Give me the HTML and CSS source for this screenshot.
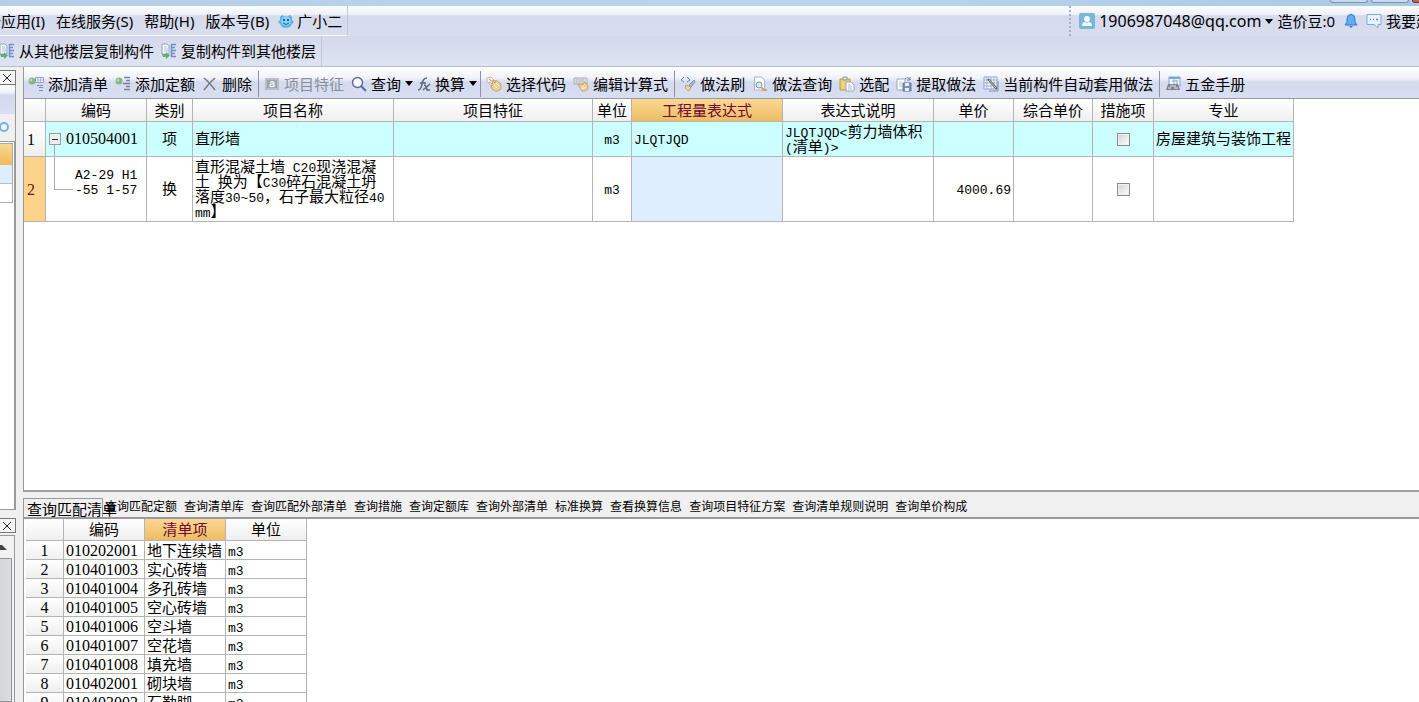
FILE: index.html
```html
<!DOCTYPE html>
<html lang="zh-CN">
<head>
<meta charset="utf-8">
<title>构件做法</title>
<link rel="stylesheet" href="styles.css">
</head>
<body>
<svg class="defs" aria-hidden="true">
  <symbol id="i-copy" viewBox="0 0 16 16"><path d="M1 1h5l2 2v8H1z" fill="#f4f8fd" stroke="#8fa6c4"/><path d="M3 4h3M3 6h4M3 8h4" stroke="#a3c4e5"/><path d="M1 11h4V9l4 3.500-4 3.500v-2H2z" fill="#5faf76"/><path d="M10 1.500h5M10 4.500h4M10 7.500h5M10 10.500h4M10 13.500h5M10.500 1v13" stroke="#6b8fc6" stroke-width="1.400"/></symbol>
  <symbol id="i-addlist" viewBox="0 0 16 16"><circle cx="4" cy="5" r="3.500" fill="#8bb387"/><circle cx="3" cy="4" r="1.500" fill="#bcd6b5"/><path d="M7.500 1.500h8v5h-8z" fill="#f5f8fc" stroke="#91a0b8"/><path d="M8 4h7M10 2v4M12.500 2v4" stroke="#a9b6ca"/><path d="M9 9.500h6M11 11.500h4M11 14.500h4" stroke="#8190a5"/></symbol>
  <symbol id="i-addquota" viewBox="0 0 16 16"><circle cx="4" cy="5" r="3.500" fill="#8bb387"/><circle cx="3" cy="4" r="1.500" fill="#bcd6b5"/><path d="M9 1.500h6M11 4.500h4M8 7.500h7M11 10.500h4M9 13.500h6" stroke="#75839a" stroke-width="1.300"/></symbol>
  <symbol id="i-del" viewBox="0 0 16 16"><path d="M2 2Q7 6 13 14M13 2Q7 7 2 14" fill="none" stroke="#777" stroke-width="1.500"/></symbol>
  <symbol id="i-feature" viewBox="0 0 16 16"><path d="M1 2h14v12H1z" fill="#b9bdc8"/><path d="M3 4h10v8H3z" fill="#9fa4b1"/><path d="M6 6.500Q9 4.500 10 7v4M10 8Q6 7.500 6 9.500T10 10" fill="none" stroke="#f4f5f8" stroke-width="1.400"/></symbol>
  <symbol id="i-search" viewBox="0 0 16 16"><circle cx="6.500" cy="6.500" r="5" fill="#fafcff" stroke="#5c669e" stroke-width="1.400"/><path d="M10 10l5 5" stroke="#5c669e" stroke-width="2"/></symbol>
  <symbol id="i-fx" viewBox="0 0 14 16"><path d="M1 14Q4 14 5 8T10 2M3 7h6M7 9q2 0 3 5h3M13 8L6 14" fill="none" stroke="#59657c" stroke-width="1.500"/></symbol>
  <symbol id="i-hand" viewBox="0 0 16 16"><path d="M1 2l4-1 5 5-5 4-4-5z" fill="#f5efe8" stroke="#c9b5a7"/><path d="M3 3l5 4M3 6l3 2" stroke="#c09588"/><path d="M6 9l1-5 2 3 1-3 5 4v5l-3 2H9l-4-3z" fill="#ecd09a" stroke="#c5a26a"/><path d="M8 9l3 3M10 7l3 3" stroke="#fff0cd"/></symbol>
  <symbol id="i-edit" viewBox="0 0 16 16"><path d="M1 2h13v6H1z" fill="#edf0f3" stroke="#a2a8ae"/><path d="M2 4h11M2 6h11M4 2v6M7 2v6M10 2v6" stroke="#b7bdc5"/><path d="M5 8l4 1 3-3 3 4v3l-3 2H9l-2-3z" fill="#ecd09a" stroke="#c5a26a"/><path d="M9 10l3 2M8 12l3 1" stroke="#fff0cd"/></symbol>
  <symbol id="i-brush" viewBox="0 0 16 16"><path d="M4 1L1 4l3 2M7 1l3 3-3 2" fill="none" stroke="#7184a5"/><path d="M14 4l1 2-4 5-2-2z" fill="#a5b6cc" stroke="#8596ad"/><path d="M6 9l5 2-2 4-4-3z" fill="#e4d8a9" stroke="#b5a773"/></symbol>
  <symbol id="i-find" viewBox="0 0 16 16"><path d="M2.500 1h7l3 3v10h-10z" fill="#fafcff" stroke="#aab4c5"/><circle cx="7" cy="9" r="3" fill="#d9eaf5" stroke="#8293a7"/><path d="M9 11l3 3h3" fill="none" stroke="#c5aa69" stroke-width="2"/></symbol>
  <symbol id="i-paste" viewBox="0 0 16 16"><path d="M1 3h10v11H1z" fill="#efcf78" stroke="#b99745"/><path d="M4 1h4v3H4z" fill="#e4e6e8" stroke="#899"/><path d="M7 6h5l3 3v6H7z" fill="#fff" stroke="#99a6ba"/><path d="M9 9h3M9 11h4M9 13h4" stroke="#afbdcf"/></symbol>
  <symbol id="i-extract" viewBox="0 0 16 16"><path d="M1 3h8v11H1z" fill="#fff" stroke="#98a9c1"/><path d="M3 6h3M3 8h3M3 10h3" stroke="#b4c6dc"/><path d="M7 7h8v8H7z" fill="#7d90be" stroke="#6474a1"/><path d="M9 7h4v3H9zM9 12h4v3H9z" fill="#e9eef8"/><path d="M9 3q3-3 5 1m0-3v3h-3" fill="none" stroke="#6581af"/></symbol>
  <symbol id="i-auto" viewBox="0 0 16 16"><path d="M1 1h13v12H1z" fill="#f8faff" stroke="#8ca2c5"/><path d="M1 4h13M1 7h13M1 10h13M4 1v12M8 1v12M11 1v12" stroke="#9db1d2"/><path d="M5 3l9 10" stroke="#576272" stroke-width="2"/><path d="M6 4l7 8" stroke="#d1b877"/><path d="M15 5v10H6" fill="none" stroke="#8291ad"/></symbol>
  <symbol id="i-manual" viewBox="0 0 16 16"><path d="M4 1h11v9H4z" fill="#f2f7fd" stroke="#7ca3d1"/><path d="M4 2h11" stroke="#7ca3d1" stroke-width="2"/><path d="M7 5h5M9 3v6M12 4v5" stroke="#93aac5"/><path d="M3 8h10l2 6H1z" fill="#7c8490"/><path d="M3 12h3M9 12h4M5 10h6" stroke="#eee"/></symbol>
</svg>

<div class="app">
  <div class="titlebar"><span class="winbtn"></span><span class="winbtn"></span><span class="winbtn close"></span></div>
  <header class="menus">
    <nav class="menu">
      <button>云应用(I)</button><button>在线服务(S)</button><button>帮助(H)</button><button>版本号(B)</button>
      <button class="pet"><svg viewBox="0 0 16 16"><path d="M2 4l2-2 2 1h4l2-1 2 2v3l2 2-2 2-2 3-4 1-4-1-2-3-2-2 2-2z" fill="#56b1e5"/><circle cx="8" cy="8" r="5" fill="#87d0f4"/><path d="M5 7h2M9 7h2" stroke="#17669a" stroke-width="2"/><path d="M5 10q3 3 6 0" fill="none" stroke="#17669a"/></svg>广小二</button>
    </nav>
    <div class="account">
      <button class="user"><svg viewBox="0 0 16 16"><rect width="16" height="16" rx="2" fill="#79b7d6"/><circle cx="8" cy="6" r="3" fill="#eef8fd"/><path d="M3 13q0-4 3-4l2 1 2-1q3 0 3 4z" fill="#eef8fd"/></svg><span class="mail">1906987048@qq.com</span><i class="caret"></i></button>
      <span class="beans">造价豆:0</span>
      <button class="bell" aria-label="通知"><svg viewBox="0 0 14 16"><path d="M7 1q4 1 4 5v3l2 3H1l2-3V6q0-4 4-5z" fill="#63aaf2" stroke="#397bc4"/><path d="M5 13h4l-2 2z" fill="#397bc4"/></svg></button>
      <button class="withicon"><svg viewBox="0 0 16 16"><path d="M1 1.500h14v10h-3V15l-4-3.500H1z" fill="#e7f2fe" stroke="#82a8d5"/><path d="M4 6.500h1M7 6.500h1M10 6.500h2" stroke="#5b83b5" stroke-width="1.500"/></svg>我要建议</button>
    </div>
  </header>
  <div class="copybar">
    <button><svg><use href="#i-copy"/></svg>从其他楼层复制构件</button><button><svg><use href="#i-copy"/></svg>复制构件到其他楼层</button>
  </div>

  <div class="work">
    <aside class="side">
      <section class="dock upper">
        <button class="closebox" aria-label="关闭"><svg viewBox="0 0 8 8"><path d="M0 0l8 8M8 0L0 8" stroke="#222"/></svg></button>
        <div class="dockhead"></div>
        <div class="dockfind"><svg viewBox="0 0 10 14"><circle cx="4" cy="6" r="4" fill="#edf8ff" stroke="#6fb1df" stroke-width="2"/></svg></div>
        <div class="list"><div class="sel"></div><div class="hov"></div><div></div></div>
      </section>
      <section class="dock lower">
        <button class="closebox" aria-label="关闭"><svg viewBox="0 0 8 8"><path d="M0 0l8 8M8 0L0 8" stroke="#222"/></svg></button>
        <div class="scroll"><svg viewBox="0 0 8 5"><path d="M0 5V0l2 0 5 5z" fill="#444"/></svg><div class="thumb"></div></div>
      </section>
    </aside>

    <main class="main">
      <section class="top">
        <div class="toolbar">
          <button><svg><use href="#i-addlist"/></svg>添加清单</button>
          <button><svg><use href="#i-addquota"/></svg>添加定额</button>
          <button><svg><use href="#i-del"/></svg>删除</button>
          <span class="sep"></span>
          <button disabled><svg><use href="#i-feature"/></svg>项目特征</button>
          <button class="drop"><svg><use href="#i-search"/></svg>查询<i class="caret"></i></button>
          <button class="drop"><svg class="fx"><use href="#i-fx"/></svg>换算<i class="caret"></i></button>
          <span class="sep"></span>
          <button><svg><use href="#i-hand"/></svg>选择代码</button>
          <button><svg><use href="#i-edit"/></svg>编辑计算式</button>
          <span class="sep"></span>
          <button><svg><use href="#i-brush"/></svg>做法刷</button>
          <button><svg><use href="#i-find"/></svg>做法查询</button>
          <button><svg><use href="#i-paste"/></svg>选配</button>
          <button><svg><use href="#i-extract"/></svg>提取做法</button>
          <button><svg><use href="#i-auto"/></svg>当前构件自动套用做法</button>
          <span class="sep"></span>
          <button><svg><use href="#i-manual"/></svg>五金手册</button>
        </div>
        <table class="grid items">
          <colgroup><col class="w22"><col class="w101"><col class="w46"><col class="w201"><col class="w199"><col class="w39"><col class="w151"><col class="w151"><col class="w80"><col class="w79"><col class="w61"><col class="w140"></colgroup>
          <thead><tr><th></th><th>编码</th><th>类别</th><th>项目名称</th><th>项目特征</th><th>单位</th><th class="hot">工程量表达式</th><th>表达式说明</th><th>单价</th><th>综合单价</th><th>措施项</th><th>专业</th></tr></thead>
          <tbody>
            <tr class="bill"><th scope="row"><b class="n">1</b></th><td class="parent"><button class="toggle" aria-label="折叠"></button><b class="n">010504001</b></td><td class="c">项</td><td>直形墙</td><td></td><td class="c"><b>m3</b></td><td><b>JLQTJQD</b></td><td><b>JLQTJQD&lt;</b>剪力墙体积<br><b>(</b>清单<b>)&gt;</b></td><td></td><td></td><td class="c"><input type="checkbox" aria-label="措施项 1"></td><td class="c">房屋建筑与装饰工程</td></tr>
            <tr class="quota"><th scope="row"><b class="n">2</b></th><td class="child"><b>A2-29 H1</b><br><b>-55 1-57</b></td><td class="c">换</td><td>直形混凝土墙<b> C20</b>现浇混凝<br>土<b> </b>换为【<b>C30</b>碎石混凝土坍<br>落度<b>30~50</b>，石子最大粒径<b>40</b><br><b>mm</b>】</td><td></td><td class="c"><b>m3</b></td><td class="cur"></td><td></td><td class="r"><b>4000.69</b></td><td></td><td class="c"><input type="checkbox" aria-label="措施项 2"></td><td></td></tr>
          </tbody>
        </table>
      </section>

      <section class="bottom">
        <div class="tabs" role="tablist">
          <button class="active" role="tab" aria-selected="true">查询匹配清单</button><button role="tab">查询匹配定额</button><button role="tab">查询清单库</button><button role="tab">查询匹配外部清单</button><button role="tab">查询措施</button><button role="tab">查询定额库</button><button role="tab">查询外部清单</button><button role="tab">标准换算</button><button role="tab">查看换算信息</button><button role="tab">查询项目特征方案</button><button role="tab">查询清单规则说明</button><button role="tab">查询单价构成</button>
        </div>
        <div class="result">
          <table class="grid match">
            <colgroup><col class="w38"><col class="w81"><col class="w81"><col class="w81"></colgroup>
            <thead><tr><th></th><th>编码</th><th class="hot">清单项</th><th>单位</th></tr></thead>
            <tbody>
              <tr><th scope="row"><b class="n">1</b></th><td><b class="n">010202001</b></td><td>地下连续墙</td><td><b>m3</b></td></tr>
              <tr><th scope="row"><b class="n">2</b></th><td><b class="n">010401003</b></td><td>实心砖墙</td><td><b>m3</b></td></tr>
              <tr><th scope="row"><b class="n">3</b></th><td><b class="n">010401004</b></td><td>多孔砖墙</td><td><b>m3</b></td></tr>
              <tr><th scope="row"><b class="n">4</b></th><td><b class="n">010401005</b></td><td>空心砖墙</td><td><b>m3</b></td></tr>
              <tr><th scope="row"><b class="n">5</b></th><td><b class="n">010401006</b></td><td>空斗墙</td><td><b>m3</b></td></tr>
              <tr><th scope="row"><b class="n">6</b></th><td><b class="n">010401007</b></td><td>空花墙</td><td><b>m3</b></td></tr>
              <tr><th scope="row"><b class="n">7</b></th><td><b class="n">010401008</b></td><td>填充墙</td><td><b>m3</b></td></tr>
              <tr><th scope="row"><b class="n">8</b></th><td><b class="n">010402001</b></td><td>砌块墙</td><td><b>m3</b></td></tr>
              <tr><th scope="row"><b class="n">9</b></th><td><b class="n">010403002</b></td><td>石勒脚</td><td><b>m3</b></td></tr>
            </tbody>
          </table>
        </div>
      </section>
    </main>
  </div>
</div>
</body>
</html>
```

FILE: styles.css
```css
* { box-sizing: border-box; }
body {
  margin: 0;
  font: 15px/20px "Noto Sans", "Noto Sans CJK SC", sans-serif;
  color: #000;
  background: #f0f0f0;
}
button {
  font: inherit;
  color: inherit;
  background: none;
  border: 0;
  padding: 0;
  white-space: nowrap;
}
svg { width: 16px; height: 16px; flex: none; display: block; }
.defs { display: none; }
.app { height: 100vh; display: flex; flex-direction: column; overflow: hidden; }

.titlebar {
  flex: 0 0 6px;
  display: flex;
  justify-content: flex-end;
  gap: 3px;
  background: linear-gradient(90deg, #b5cfe9, #b9d5ee 60%, #a9c9e6);
}
.winbtn {
  width: 38px;
  height: 3px;
  border: 1px solid #7e93ab;
  border-top: 0;
  border-radius: 0 0 4px 4px;
  background: #c7daec;
}
.winbtn.close { width: 10px; margin-right: -3px; background: #c9604c; border-color: #7b3330; }

.menus {
  flex: 0 0 30px;
  display: flex;
  justify-content: space-between;
  background: linear-gradient(#fdfdff, #eef0f8 30%, #d5daec 32%, #d9deef);
}
.menu {
  display: flex;
  align-items: center;
  gap: 11px;
  margin-left: -14px;
  padding-right: 5px;
  border-right: 1px solid #c3c9dc;
  border-bottom: 1px solid #f5f7fc;
}
.withicon { display: flex; align-items: center; gap: 4px; }
.pet { display: flex; align-items: center; gap: 3px; margin-left: -2px; }
.account {
  display: flex;
  align-items: center;
  gap: 4px;
  margin-right: -27px;
  padding-left: 8px;
  border-left: 2px dotted #a9afc2;
}
.user { display: flex; align-items: center; gap: 4px; }
.mail { font-size: 16px; }
.bell { margin: 0 4px 0 5px; }
.bell svg { width: 14px; }
.caret {
  border: 4px solid transparent;
  border-top: 5px solid #000;
  border-bottom: 0;
}

.copybar {
  flex: 0 0 31px;
  display: flex;
  gap: 7px;
  background: linear-gradient(#d3d9eb, #dfe4f2);
  border-bottom: 1px solid #b9bfd0;
}
.copybar button { display: flex; align-items: center; gap: 4px; }
.copybar button:first-child { margin-left: -1px; }
.copybar button:last-child { padding-right: 5px; border-right: 1px solid #c0c7db; }

.work { flex: 1; min-height: 0; display: grid; grid-template-columns: 16px minmax(0, 1fr); column-gap: 7px; }
.side { display: grid; grid-template-rows: minmax(0, 1fr) 184px; row-gap: 8px; padding-top: 3px; min-height: 0; }
.dock { display: flex; flex-direction: column; min-height: 0; }
.closebox {
  flex: none;
  height: 15px;
  width: 16px;
  border: 1px solid #777;
  border-left: 0;
  padding-right: 2px;
  display: flex;
  align-items: center;
  justify-content: center;
  background: #f6f6f6;
}
.closebox svg { width: 8px; height: 8px; }
.upper { border-bottom: 1px solid #999; background: linear-gradient(90deg, #fff 14px, #999 14px); }
.dockhead { height: 29px; margin-right: 1px; background: linear-gradient(#fff, #f1f3fa 25%, #d3d9ee 35%, #d9dff1); }
.dockfind { height: 28px; margin-right: 1px; padding-top: 7px; background: #f0f0f2; border-bottom: 1px solid #999; }
.dockfind svg { width: 10px; height: 14px; }
.list { margin: 1px 3px 0 0; border: 1px solid #aaa; border-left: 0; }
.list div { height: 18px; }
.list .sel { height: 21px; background: linear-gradient(#f8d794, #efbb5a); }
.list .hov { height: 19px; background: #deeefd; border-bottom: 1px solid #a9c3db; }
.scroll { flex: 1; margin: 2px 1px 0 0; border: solid #999; border-width: 1px 1px 0 0; background: #f2f2f2; display: flex; flex-direction: column; }
.scroll svg { width: 8px; height: 5px; margin: 9px 0 8px; }
.thumb { flex: 1; margin-right: 2px; border: 1px solid #8f9296; border-left: 0; background: linear-gradient(90deg, #d4d5d7, #dcdde0); }

.main { display: grid; grid-template-rows: minmax(0, 1fr) 204px; row-gap: 6px; min-width: 0; min-height: 0; }
.top {
  background: #fff;
  border-left: 1px solid #999;
  border-bottom: 2px solid #a0a0a0;
  overflow: hidden;
}
.toolbar {
  height: 32px;
  display: flex;
  align-items: center;
  padding-top: 2px;
  background: linear-gradient(#fff, #f1f3fa 35%, #d5dbef 50%, #d9dff2);
  border-bottom: 1px solid #999;
}
.toolbar button { display: flex; align-items: center; gap: 4px; padding: 0 3px 0 4px; }
.toolbar .drop { padding-right: 0; }
.toolbar .fx { width: 14px; }
.toolbar button:disabled { color: #8b8e98; }
.sep { flex: none; width: 1px; height: 26px; margin: 0 1px 0 3px; background: #8f94a3; }

.grid {
  table-layout: fixed;
  border-collapse: separate;
  border-spacing: 0;
  font: 15px/15px "Noto Sans CJK SC", sans-serif;
}
.grid th, .grid td {
  padding: 0 0 3px 2px;
  border: solid #b4b4b4;
  border-width: 0 1px 1px 0;
  text-align: left;
  white-space: nowrap;
}
.grid th { padding: 0 0 2px; font-weight: 400; text-align: center; background: linear-gradient(#fff, #efefef); }
.grid b { font: 13px/1px "Liberation Mono", monospace; white-space: pre; }
.grid .n { font: 16px/1px "Liberation Serif", serif; }
.grid .hot { color: #6d0a35; background: linear-gradient(#fbd795, #eebd61); }
.grid .c { text-align: center; padding: 0 0 3px; }
.grid .r { text-align: right; padding-right: 2px; }
.w22 { width: 22px; }
.w38 { width: 38px; }
.w39 { width: 39px; }
.w46 { width: 46px; }
.w61 { width: 61px; }
.w79 { width: 79px; }
.w80 { width: 80px; }
.w81 { width: 81px; }
.w101 { width: 101px; }
.w140 { width: 140px; }
.w151 { width: 151px; }
.w199 { width: 199px; }
.w201 { width: 201px; }
.items { width: 1270px; }
.items thead tr { height: 23px; }
.items tbody th { text-align: left; padding-left: 3px; }
.bill { height: 35px; background: #cff; }
.quota { height: 65px; }
.items .quota th { color: #6d1414; background: #ffd28a; }
.items .quota .cur { background: #deeefe; }
.items .parent, .items .child { position: relative; }
.items .parent { padding-left: 3px; }
.items .child { padding: 0 0 18px 29px; }
.parent::after {
  content: "";
  position: absolute;
  left: 8px;
  top: 23px;
  bottom: 0;
  border-left: 1px solid #aaa;
}
.child::before {
  content: "";
  position: absolute;
  left: 8px;
  top: 0;
  width: 18px;
  height: 50%;
  border: solid #aaa;
  border-width: 0 0 1px 1px;
}
.toggle {
  width: 12px;
  height: 12px;
  margin-right: 5px;
  border: 1px solid #999;
  background: linear-gradient(#222, #222) center / 6px 1px no-repeat, #eee;
  vertical-align: middle;
}
input[type="checkbox"] {
  appearance: none;
  display: block;
  width: 13px;
  height: 13px;
  margin: 3px auto 0;
  border: 1px solid #8a8a8a;
  background: linear-gradient(135deg, #d0d0d0, #fff);
  box-shadow: inset 0 0 0 1px #f2f2f2;
}

.bottom { display: flex; flex-direction: column; min-height: 0; overflow: hidden; }
.tabs {
  flex: 0 0 21px;
  display: flex;
  align-items: flex-start;
  gap: 7px;
  font: 12px/16px "Noto Sans CJK SC", sans-serif;
  border-bottom: 2px solid #999;
}
.tabs .active {
  width: 80px;
  height: 19px;
  margin-right: -5px;
  padding: 0 0 0 3px;
  border: 1px solid #999;
  border-bottom: 0;
  font-size: 15px;
  line-height: 19px;
  text-align: left;
}
.result { flex: 1; padding: 0 0 0 2px; background: #fff; border-left: 1px solid #999; }
.match { width: 281px; }
.match thead tr { height: 22px; }
.match tbody tr { height: 19px; }
.match tbody td { padding-bottom: 2px; }
```
